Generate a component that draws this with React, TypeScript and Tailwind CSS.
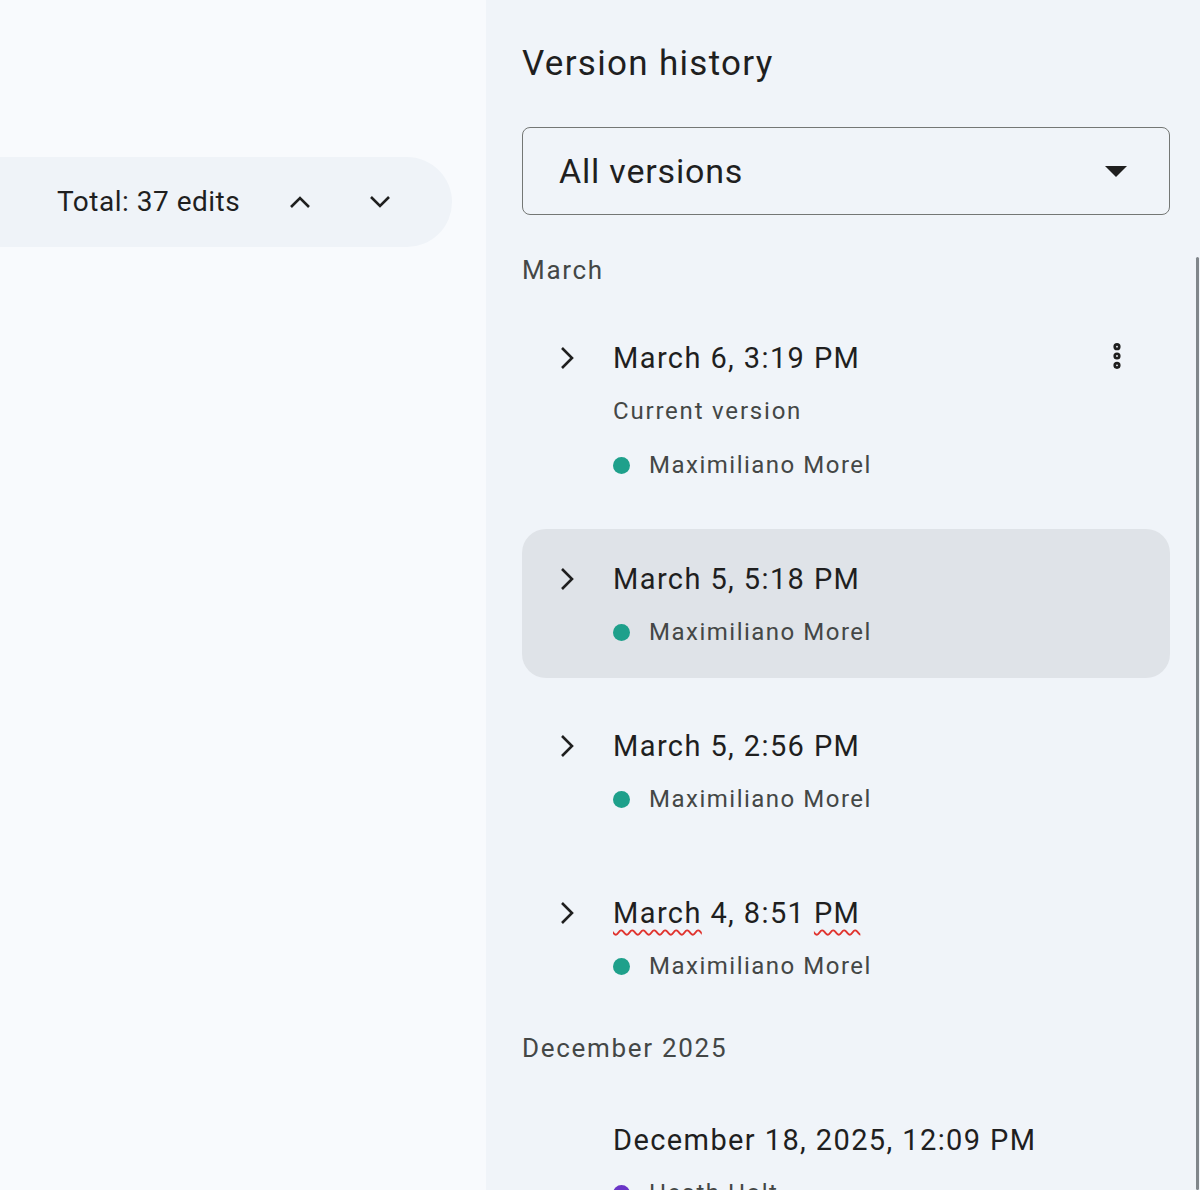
import { MoreVertical } from "lucide-react"

type Version = {
  title: string
  note?: string
  author: string
  color: string
  chevron?: boolean
  active?: boolean
  menu?: boolean
  typo?: boolean
}

const march: Version[] = [
  { title: "March 6, 3:19 PM", note: "Current version", author: "Maximiliano Morel", color: "bg-[#1ea08b]", chevron: true, menu: true },
  { title: "March 5, 5:18 PM", author: "Maximiliano Morel", color: "bg-[#1ea08b]", chevron: true, active: true },
  { title: "March 5, 2:56 PM", author: "Maximiliano Morel", color: "bg-[#1ea08b]", chevron: true },
  { title: "March 4, 8:51 PM", author: "Maximiliano Morel", color: "bg-[#1ea08b]", chevron: true, typo: true },
]

const december: Version[] = [
  { title: "December 18, 2025, 12:09 PM", author: "Heath Holt", color: "bg-[#6a35c7]" },
]

const font = "font-['Roboto',_'Liberation_Sans',_sans-serif]"

function Squiggle({ children }: { children: string }) {
  return (
    <span className="underline decoration-wavy decoration-[#e0342f] decoration-[1.5px] underline-offset-[6px]">
      {children}
    </span>
  )
}

function Entry({ v }: { v: Version }) {
  return (
    <div className={`flex flex-col rounded-[24px] py-[30px] ${v.active ? "bg-[#dfe3e8]" : ""}`}>
      <div className="flex h-[40px] items-center">
        <div className="flex w-[91px] shrink-0 items-center">
          {v.chevron ? (
            <svg width="16" height="24" viewBox="0 0 16 24" className="ml-[37px]">
              <polyline points="3,2 13,12 3,22" fill="none" stroke="#1f1f1f" strokeWidth="2.6" />
            </svg>
          ) : null}
        </div>
        <span className="mt-[2px] whitespace-nowrap text-[29px] tracking-[1.4px] text-[#1f1f1f]">
          {v.typo ? (
            <>
              <Squiggle>March</Squiggle> 4, 8:51 <Squiggle>PM</Squiggle>
            </>
          ) : (
            v.title
          )}
        </span>
        {v.menu ? (
          <MoreVertical className="ml-auto mr-[37px] -mt-[4px] h-[32px] w-[32px] text-[#1f1f1f]" strokeWidth={3.4} />
        ) : null}
      </div>
      {v.note ? (
        <div className="mt-[17px] flex h-[32px] items-center pl-[91px] text-[24px] tracking-[1.8px] text-[#444746]">
          {v.note}
        </div>
      ) : null}
      <div className={`${v.note ? "mt-[22px]" : "mt-[17px]"} flex h-[32px] items-center gap-[19px] pl-[91px]`}>
        <span className={`h-[17px] w-[17px] rounded-full ${v.color}`} />
        <span className="text-[24px] tracking-[1.5px] text-[#444746]">{v.author}</span>
      </div>
    </div>
  )
}

export default function App() {
  return (
    <div className={`flex h-[1190px] w-[1200px] overflow-hidden ${font}`}>
      <div className="w-[486px] shrink-0 bg-[#f8fafd]">
        <div className="mt-[157px] flex h-[90px] w-[452px] items-center rounded-r-full bg-[#eff3f8] pl-[57px]">
          <span className="w-[223px] text-[28px] tracking-[0.5px] text-[#1f1f1f]">Total: 37 edits</span>
          <button type="button" className="flex h-[40px] w-[40px] items-center justify-center">
            <svg width="22" height="14" viewBox="0 0 22 14">
              <polyline points="2,12 11,3 20,12" fill="none" stroke="#1f1f1f" strokeWidth="2.6" />
            </svg>
          </button>
          <button type="button" className="ml-[40px] flex h-[40px] w-[40px] items-center justify-center">
            <svg width="22" height="14" viewBox="0 0 22 14">
              <polyline points="2,2 11,11 20,2" fill="none" stroke="#1f1f1f" strokeWidth="2.6" />
            </svg>
          </button>
        </div>
      </div>

      <div className="relative flex-1 bg-[#f0f4f9] pl-[36px] pr-[30px] pt-[40px]">
        <h2 className="h-[48px] text-[35px] leading-[48px] tracking-[1.3px] text-[#1f1f1f]">Version history</h2>

        <button
          type="button"
          className="mt-[39px] flex h-[88px] w-full items-center rounded-[8px] border-[1.5px] border-[#747775] pl-[36px] pr-[42px] text-left"
        >
          <span className="text-[34px] tracking-[0.8px] text-[#1f1f1f]">All versions</span>
          <svg width="22" height="11" viewBox="0 0 22 11" className="ml-auto">
            <polygon points="0,0 22,0 11,11" fill="#1f1f1f" />
          </svg>
        </button>

        <div className="mt-[39px] flex h-[32px] items-center text-[26px] tracking-[1.7px] text-[#444746]">March</div>
        <div className="mt-[22px] flex flex-col gap-[18px]">
          {march.map((v) => (
            <Entry key={v.title} v={v} />
          ))}
        </div>

        <div className="mt-[20px] flex h-[32px] items-center text-[26px] tracking-[1.7px] text-[#444746]">
          December 2025
        </div>
        <div className="mt-[26px] flex flex-col gap-[18px]">
          {december.map((v) => (
            <Entry key={v.title} v={v} />
          ))}
        </div>

        <div className="absolute right-[1px] top-[257px] h-[933px] w-[3px] rounded-full bg-[#80868b]" />
      </div>
    </div>
  )
}
